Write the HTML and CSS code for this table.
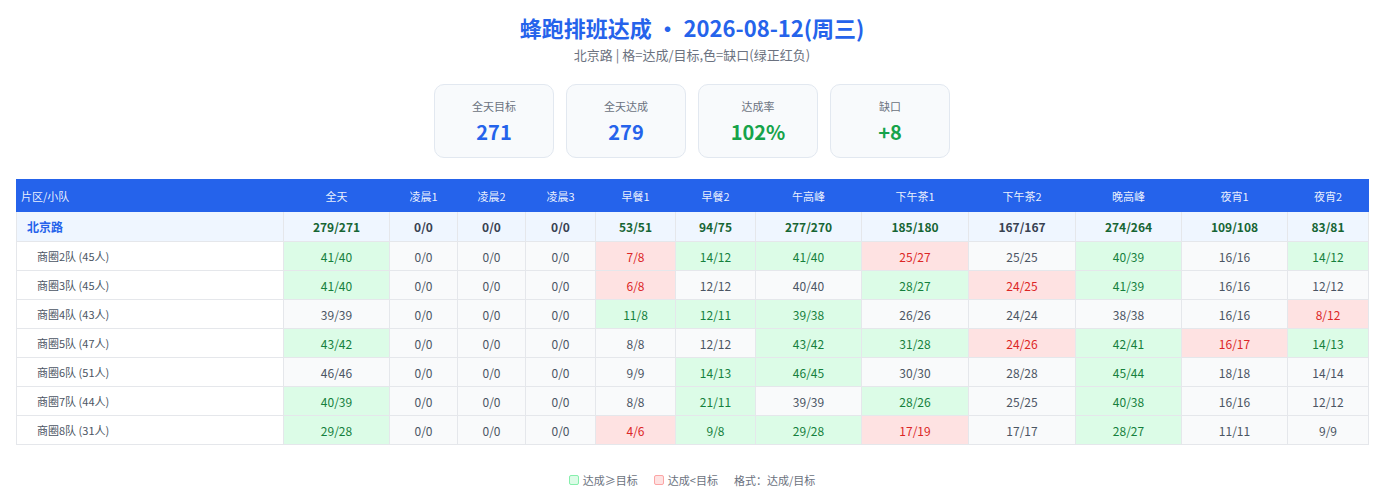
FILE: index.html
```html
<!DOCTYPE html>
<html lang="zh-CN">
<head>
<meta charset="utf-8">
<title>蜂跑排班达成</title>
<link rel="stylesheet" href="styles.css">
</head>
<body>
<div class="page">
  <h1 class="title">蜂跑排班达成 · 2026-08-12(周三)</h1>
  <div class="subtitle">北京路 | 格=达成/目标,色=缺口(绿正红负)</div>

  <div class="cards">
    <div class="card"><div class="card-label">全天目标</div><div class="card-value blue">271</div></div>
    <div class="card"><div class="card-label">全天达成</div><div class="card-value blue">279</div></div>
    <div class="card"><div class="card-label">达成率</div><div class="card-value green">102%</div></div>
    <div class="card"><div class="card-label">缺口</div><div class="card-value green">+8</div></div>
  </div>

  <table class="grid">
    <colgroup>
      <col style="width:267px"><col style="width:106px"><col style="width:68px"><col style="width:68px"><col style="width:70px"><col style="width:80px"><col style="width:80px"><col style="width:106px"><col style="width:107px"><col style="width:107px"><col style="width:106px"><col style="width:106px"><col style="width:81px">
    </colgroup>
    <thead>
      <tr>
        <th class="name-h">片区/小队</th><th>全天</th><th>凌晨1</th><th>凌晨2</th><th>凌晨3</th><th>早餐1</th><th>早餐2</th><th>午高峰</th><th>下午茶1</th><th>下午茶2</th><th>晚高峰</th><th>夜宵1</th><th>夜宵2</th>
      </tr>
    </thead>
    <tbody>
      <tr class="region">
        <td class="name">北京路</td>
        <td class="pos">279/271</td><td>0/0</td><td>0/0</td><td>0/0</td><td class="pos">53/51</td><td class="pos">94/75</td><td class="pos">277/270</td><td class="pos">185/180</td><td>167/167</td><td class="pos">274/264</td><td class="pos">109/108</td><td class="pos">83/81</td>
      </tr>
      <tr>
        <td class="name">商圈2队 (45人)</td>
        <td class="pos">41/40</td><td>0/0</td><td>0/0</td><td>0/0</td><td class="neg">7/8</td><td class="pos">14/12</td><td class="pos">41/40</td><td class="neg">25/27</td><td>25/25</td><td class="pos">40/39</td><td>16/16</td><td class="pos">14/12</td>
      </tr>
      <tr>
        <td class="name">商圈3队 (45人)</td>
        <td class="pos">41/40</td><td>0/0</td><td>0/0</td><td>0/0</td><td class="neg">6/8</td><td>12/12</td><td>40/40</td><td class="pos">28/27</td><td class="neg">24/25</td><td class="pos">41/39</td><td>16/16</td><td>12/12</td>
      </tr>
      <tr>
        <td class="name">商圈4队 (43人)</td>
        <td>39/39</td><td>0/0</td><td>0/0</td><td>0/0</td><td class="pos">11/8</td><td class="pos">12/11</td><td class="pos">39/38</td><td>26/26</td><td>24/24</td><td>38/38</td><td>16/16</td><td class="neg">8/12</td>
      </tr>
      <tr>
        <td class="name">商圈5队 (47人)</td>
        <td class="pos">43/42</td><td>0/0</td><td>0/0</td><td>0/0</td><td>8/8</td><td>12/12</td><td class="pos">43/42</td><td class="pos">31/28</td><td class="neg">24/26</td><td class="pos">42/41</td><td class="neg">16/17</td><td class="pos">14/13</td>
      </tr>
      <tr>
        <td class="name">商圈6队 (51人)</td>
        <td>46/46</td><td>0/0</td><td>0/0</td><td>0/0</td><td>9/9</td><td class="pos">14/13</td><td class="pos">46/45</td><td>30/30</td><td>28/28</td><td class="pos">45/44</td><td>18/18</td><td>14/14</td>
      </tr>
      <tr>
        <td class="name">商圈7队 (44人)</td>
        <td class="pos">40/39</td><td>0/0</td><td>0/0</td><td>0/0</td><td>8/8</td><td class="pos">21/11</td><td>39/39</td><td class="pos">28/26</td><td>25/25</td><td class="pos">40/38</td><td>16/16</td><td>12/12</td>
      </tr>
      <tr>
        <td class="name">商圈8队 (31人)</td>
        <td class="pos">29/28</td><td>0/0</td><td>0/0</td><td>0/0</td><td class="neg">4/6</td><td class="pos">9/8</td><td class="pos">29/28</td><td class="neg">17/19</td><td>17/17</td><td class="pos">28/27</td><td>11/11</td><td>9/9</td>
      </tr>
    </tbody>
  </table>

  <div class="legend">
    <span class="legend-item"><span class="swatch swatch-pos"></span>达成≥目标</span>
    <span class="legend-item"><span class="swatch swatch-neg"></span>达成&lt;目标</span>
    <span class="legend-item">格式：达成/目标</span>
  </div>
</div>
</body>
</html>
```

FILE: styles.css
```css
* { box-sizing: border-box; }

body {
  margin: 0;
  background: #ffffff;
  font-family: "Noto Sans CJK SC", "Noto Sans", sans-serif;
  color: #4b5563;
}

.page {
  padding: 12px 16px 16px;
}

.title {
  margin: 0;
  text-align: center;
  font-size: 22px;
  line-height: 30px;
  font-weight: 700;
  color: #2563eb;
}

.subtitle {
  margin-top: 3px;
  text-align: center;
  font-size: 13px;
  line-height: 20px;
  color: #6b7280;
}

.cards {
  display: flex;
  justify-content: center;
  gap: 12px;
  margin-top: 19px;
}

.card {
  width: 120px;
  height: 74px;
  background: #f8fafc;
  border: 1px solid #e2e8f0;
  border-radius: 10px;
  display: flex;
  flex-direction: column;
  align-items: center;
  padding-top: 12px;
}

.card-label {
  font-size: 11px;
  line-height: 18px;
  color: #6b7280;
}

.card-value {
  margin-top: 3px;
  font-size: 20px;
  line-height: 28px;
  font-weight: 700;
}

.blue { color: #2563eb; }
.green { color: #16a34a; }

.grid {
  margin-top: 21px;
  width: 1352px;
  table-layout: fixed;
  border-collapse: collapse;
  font-size: 12px;
}

.grid th {
  height: 32px;
  padding: 0;
  background: #2563eb;
  color: rgba(255, 255, 255, 0.92);
  font-size: 11px;
  font-weight: 400;
  text-align: center;
  border: 1px solid #2563eb;
}

.grid th.name-h {
  text-align: left;
  padding-left: 4px;
}

.grid td {
  height: 29px;
  padding: 0;
  text-align: center;
  border: 1px solid #e5e7eb;
  background: #f9fafb;
  color: #4b5563;
}

.grid td.name {
  text-align: left;
  padding-left: 20px;
  font-size: 11px;
  background: #ffffff;
  color: #4b5563;
}

.grid td.pos {
  background: #dcfce7;
  color: #15803d;
}

.grid td.neg {
  background: #fee2e2;
  color: #dc2626;
}

.grid tr.region td {
  height: 30px;
  background: #eff6ff;
  font-weight: 700;
  color: #374151;
}

.grid tr.region td.pos {
  background: #eff6ff;
  color: #166534;
}

.grid tr.region td.name {
  padding-left: 10px;
  color: #2563eb;
  font-size: 12px;
}

.legend {
  margin-top: 25px;
  display: flex;
  justify-content: center;
  gap: 16px;
  font-size: 11px;
  line-height: 20px;
  color: #6b7280;
}

.legend-item {
  display: inline-flex;
  align-items: center;
}

.swatch {
  display: inline-block;
  width: 10px;
  height: 10px;
  border-radius: 2px;
  margin-right: 4px;
}

.swatch-pos {
  background: #dcfce7;
  border: 1px solid #86efac;
}

.swatch-neg {
  background: #fee2e2;
  border: 1px solid #fca5a5;
}
```
